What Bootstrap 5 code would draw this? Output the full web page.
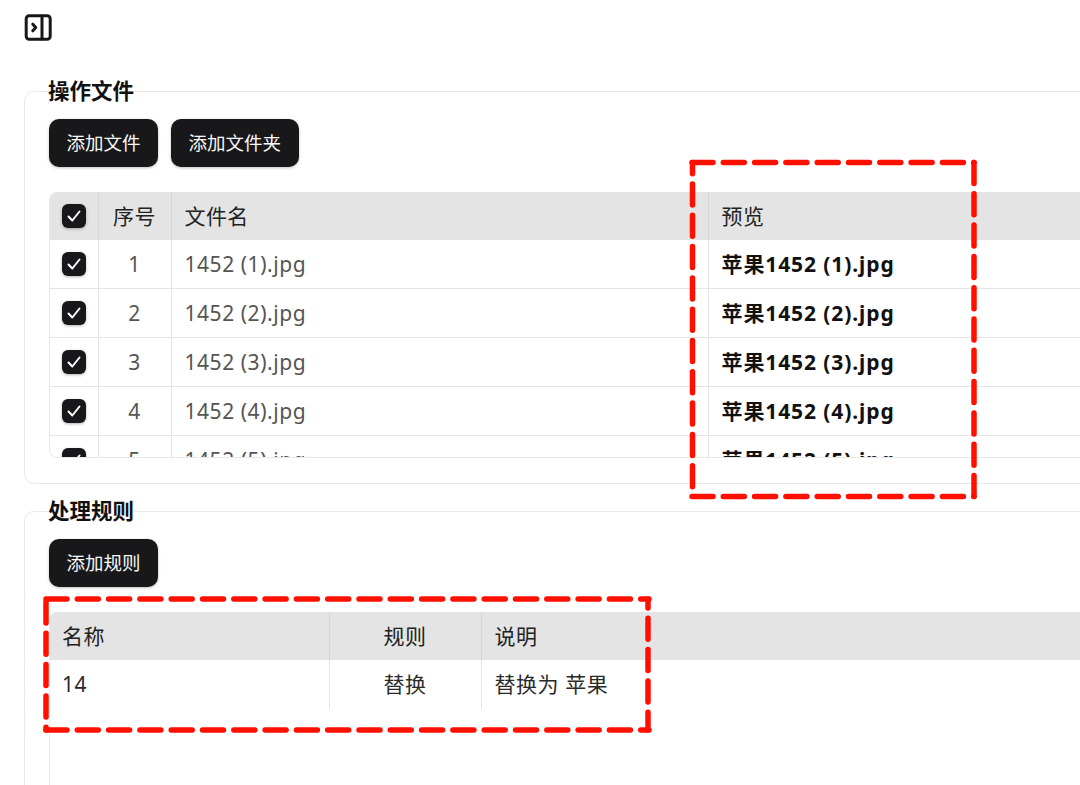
<!DOCTYPE html>
<html lang="zh-CN">
<head>
    <meta charset="UTF-8">
    <meta name="viewport" content="width=device-width, initial-scale=1.0">
    <title>批量重命名</title>
    <link href="https://cdn.jsdelivr.net/npm/bootstrap@5.3.0/dist/css/bootstrap.min.css" rel="stylesheet">
    <style>
        html, body {
            height: 785px;
            overflow: hidden;
        }
        body {
            font-family: "Noto Sans", "Noto Sans CJK SC", sans-serif;
            background: #fff;
            color: #111;
            position: relative;
        }
        .page-wrap {
            width: 1240px;
            padding: 14px 0 0 24px;
        }
        .side-toggle {
            display: block;
            width: 28px;
            height: 27px;
            margin-bottom: 36px;
        }
        .panel-box {
            border: 1px solid #e8e8e8;
            border-radius: 10px;
            padding: 0 24px 25px;
            margin-bottom: 13px;
        }
        .panel-box legend {
            float: none;
            width: auto;
            margin: 0 0 0 -1px;
            padding: 0;
            font-size: 21.5px;
            line-height: 28px;
            font-weight: 700;
            color: #111;
        }
        .btn-ink {
            background: #18181b;
            color: #fafafa;
            border: 0;
            border-radius: 10px;
            height: 48px;
            padding: 0 17.5px;
            font-size: 18.5px;
            line-height: 48px;
            box-shadow: 0 1px 3px rgba(0, 0, 0, .25);
        }
        .btn-row {
            column-gap: 13px;
            padding-top: 14px;
            margin-bottom: 25px;
        }
        .grid-wrap {
            height: 266px;
            overflow: hidden;
            border: 1px solid #e8e8e8;
            border-width: 0 0 1px 1px;
            border-radius: 8px;
        }
        .grid-tbl {
            table-layout: fixed;
            width: 100%;
            margin: 0;
            font-size: 21px;
        }
        .grid-tbl th, .grid-tbl td {
            height: 48.8px;
            padding: 0 13px;
            vertical-align: middle;
            white-space: nowrap;
            border-bottom: 1px solid #e5e5e5;
            border-right: 1px solid #e5e5e5;
            box-shadow: none;
            line-height: 28px;
        }
        .grid-tbl th:first-child, .grid-tbl td:first-child {
            padding: 0 12px;
        }
        .grid-tbl th {
            height: 48px;
            background: #e4e4e4;
            color: #222;
            font-weight: 400;
            letter-spacing: .4px;
            border-bottom: 0;
            border-right-color: #d5d5d5;
        }
        .grid-tbl td {
            color: #555;
            letter-spacing: .55px;
        }
        .grid-tbl td.file-new {
            color: #111;
            font-weight: 700;
            letter-spacing: .9px;
        }
        .grid-tbl td.cell-dark {
            color: #2a2a2a;
        }
        .rule-tbl td {
            border-bottom: 0;
        }
        .grid-tbl .form-check-input {
            display: block;
            width: 24px;
            height: 24px;
            margin: 0;
            border: 0;
            border-radius: 6px;
            background-color: #18181b;
            background-size: 24px 24px;
            background-image: url("data:image/svg+xml,%3csvg xmlns='http://www.w3.org/2000/svg' viewBox='0 0 24 24'%3e%3cpath fill='none' stroke='%23fff' stroke-width='2' stroke-linecap='round' stroke-linejoin='round' d='M6.5 12.5l3.8 4 7.2-9'/%3e%3c/svg%3e");
            box-shadow: 0 1px 3px rgba(0, 0, 0, .3);
        }
        .red-marks {
            position: absolute;
            left: 0;
            top: 0;
            pointer-events: none;
        }
        .red-marks line {
            stroke: #fe0f00;
            stroke-width: 5.5;
            stroke-linecap: round;
            stroke-dasharray: 21 10.3;
        }
    </style>
</head>
<body>
    <div class="page-wrap">
        <svg class="side-toggle" viewBox="0 0 28 27" fill="none" stroke="#18181b" stroke-width="3" stroke-linecap="round" stroke-linejoin="round">
            <rect x="2.2" y="1.8" width="24" height="23.4" rx="3"/>
            <line x1="18" y1="2" x2="18" y2="25"/>
            <path d="M8.8 10.2l3 3.3-3 3.3"/>
        </svg>

        <fieldset class="panel-box">
            <legend>操作文件</legend>
            <div class="btn-row d-flex">
                <button class="btn btn-ink" type="button">添加文件</button>
                <button class="btn btn-ink" type="button">添加文件夹</button>
            </div>
            <div class="grid-wrap">
                <table class="table grid-tbl">
                    <colgroup>
                        <col style="width: 48px">
                        <col style="width: 73px">
                        <col style="width: 537px">
                        <col>
                    </colgroup>
                    <thead>
                        <tr>
                            <th><input class="form-check-input" type="checkbox" checked></th>
                            <th class="text-center">序号</th>
                            <th>文件名</th>
                            <th>预览</th>
                        </tr>
                    </thead>
                    <tbody id="fileRows"></tbody>
                </table>
            </div>
        </fieldset>

        <fieldset class="panel-box">
            <legend>处理规则</legend>
            <div class="btn-row d-flex">
                <button class="btn btn-ink" type="button">添加规则</button>
            </div>
            <div class="grid-wrap">
                <table class="table grid-tbl rule-tbl">
                    <colgroup>
                        <col style="width: 279px">
                        <col style="width: 152px">
                        <col>
                    </colgroup>
                    <thead>
                        <tr>
                            <th>名称</th>
                            <th class="text-center">规则</th>
                            <th class="border-end-0">说明</th>
                        </tr>
                    </thead>
                    <tbody>
                        <tr>
                            <td class="cell-dark">14</td>
                            <td class="text-center cell-dark">替换</td>
                            <td class="cell-dark border-end-0">替换为 苹果</td>
                        </tr>
                    </tbody>
                </table>
            </div>
        </fieldset>
    </div>

    <svg class="red-marks" width="1080" height="785">
        <line x1="692" y1="162.5" x2="974" y2="162.5"/>
        <line x1="974" y1="162.5" x2="974" y2="496.5"/>
        <line x1="692" y1="496.5" x2="974" y2="496.5"/>
        <line x1="692.5" y1="162.5" x2="692.5" y2="496.5" stroke-dashoffset="9.8"/>
        <line x1="46" y1="599" x2="649" y2="599"/>
        <line x1="648" y1="599" x2="648" y2="730" stroke-dashoffset="12"/>
        <line x1="46" y1="730" x2="649" y2="730"/>
        <line x1="46" y1="602" x2="46" y2="730"/>
    </svg>

    <script>
        const tbody = document.getElementById('fileRows');
        for (let i = 1; i <= 5; i++) {
            tbody.insertAdjacentHTML('beforeend', `
                <tr>
                    <td><input class="form-check-input" type="checkbox" checked></td>
                    <td class="text-center">${i}</td>
                    <td>1452 (${i}).jpg</td>
                    <td class="file-new">苹果1452 (${i}).jpg</td>
                </tr>`);
        }
    </script>
    <script src="https://cdn.jsdelivr.net/npm/bootstrap@5.3.0/dist/js/bootstrap.bundle.min.js"></script>
</body>
</html>
